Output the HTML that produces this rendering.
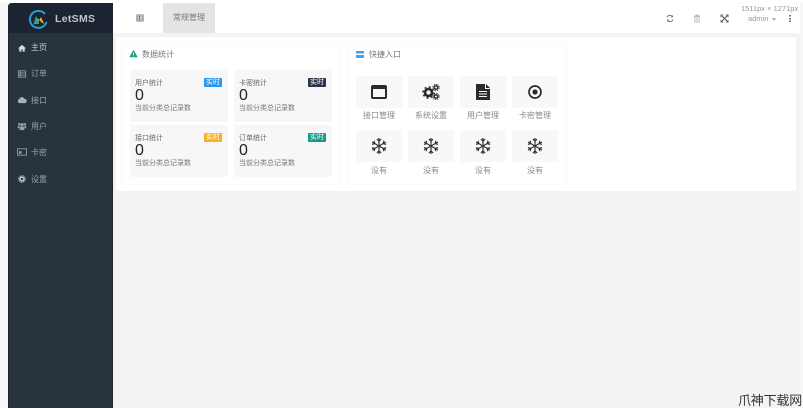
<!DOCTYPE html>
<html lang="zh"><head><meta charset="utf-8"><title>LetSMS</title>
<style>
*{box-sizing:border-box}
html,body{margin:0;padding:0;background:#fff}
#root{width:803px;height:408px;overflow:hidden;background:#f7f7f7;position:relative;font-family:"Liberation Sans","Noto Sans CJK SC",sans-serif;color:#555;filter:blur(.35px)}
.a{position:absolute}
#side{left:8px;top:3px;width:105px;height:405px;background:#27333d;border-radius:4px 0 0 0;border-left:1px solid #1d262e;border-right:1px solid #1d262e}
#brand{left:8px;top:3px;width:105px;height:30px;background:#1b2430;border-radius:4px 0 0 0}
.nav{left:31px;font-size:8px;line-height:12px;color:#9aa3aa}
.ic{left:17px;width:10px;height:10px}
.stat{background:#f7f7f8;width:98px;height:52px;border-radius:2px}
.st{left:5px;top:9px;font-size:7px;line-height:9px;color:#666}
.num{left:5px;top:18px;font-size:16px;line-height:16px;color:#222}
.sub{left:5px;top:34px;font-size:7px;line-height:10px;color:#777}
.tag{left:74px;top:8px;width:18px;height:9px;border-radius:1px;color:#fff;font-size:7px;line-height:9px;text-align:center}
.tile{background:#f8f8f8;width:46px;height:32px;display:flex;align-items:center;justify-content:center}
.lb{width:46px;text-align:center;font-size:8px;line-height:10px;color:#888}
</style></head><body><div id="root">
<svg width="0" height="0" style="position:absolute"><defs><g id="sn" stroke="#333" stroke-width="1.200" fill="none"><g id="sp"><path d="M8 8V0M5.900 1.100L8 3.200l2.100-2.100"/></g><use href="#sp" transform="rotate(60 8 8)"/><use href="#sp" transform="rotate(120 8 8)"/><use href="#sp" transform="rotate(180 8 8)"/><use href="#sp" transform="rotate(240 8 8)"/><use href="#sp" transform="rotate(300 8 8)"/></g></defs></svg>
<div class="a" style="left:0;top:0;width:803px;height:3px;background:#fff"></div>
<div class="a" style="left:113px;top:3px;width:687px;height:30px;background:#fff"></div>
<div class="a" style="left:113px;top:33px;width:687px;height:375px;background:#f3f3f3"></div>
<div class="a" id="side"></div><div class="a" id="brand"></div>
<svg class="a" style="left:28px;top:9px" width="21" height="21" viewBox="0 0 21 21"><path d="M17 5A8.500 8.500 0 1 0 18.500 13" fill="none" stroke="#2a9fd0" stroke-width="2"/><path d="M5.500 15L8 7l3 5v3z" fill="#2ba58e"/><path d="M8 7l3 5 2-4 3 7-3-2-2-3-1 0z" fill="#e8b71e"/></svg>
<div class="a" style="left:55px;top:12px;font-size:10.500px;line-height:14px;font-weight:bold;color:#bfc5ca;letter-spacing:.3px">LetSMS</div>

<svg class="a ic" style="top:43px" viewBox="0 0 11 11"><path d="M5.500 2L1 6h1.500v3.500h2.300V7h1.400v2.500h2.300V6H10z" fill="#d8dcdf"/></svg>
<div class="a nav" style="top:42px;color:#c6cbcf">主页</div>
<svg class="a ic" style="top:69px" viewBox="0 0 11 11"><path d="M1.500 2h8v7h-8z" fill="none" stroke="#8f989f"/><path d="M1.500 4.300h8M1.500 6.700h8M4 2v7" stroke="#8f989f"/></svg>
<div class="a nav" style="top:68px">订单</div>
<svg class="a ic" style="top:95px" viewBox="0 0 11 11"><path d="M3 9a2.300 2.300 0 0 1-.4-4.500A2.800 2.800 0 0 1 8 4.200 2.400 2.400 0 0 1 8.500 9z" fill="#aab1b7"/></svg>
<div class="a nav" style="top:95px">接口</div>
<svg class="a ic" style="top:121px" viewBox="0 0 11 11"><circle cx="5.500" cy="4" r="1.800" fill="#99a1a8"/><circle cx="2.300" cy="3.500" r="1.300" fill="#99a1a8"/><circle cx="8.700" cy="3.500" r="1.300" fill="#99a1a8"/><path d="M3 10V7l1-1h3l1 1v3zM.8 8V6l1-1h1v3zM10.200 8V6l-1-1h-1v3z" fill="#99a1a8"/></svg>
<div class="a nav" style="top:121px">用户</div>
<svg class="a ic" style="top:147px" viewBox="0 0 11 11"><rect x=".5" y="2" width="10" height="7" fill="none" stroke="#8f989f"/><rect x="2" y="4.500" width="3" height="3" fill="#8f989f"/></svg>
<div class="a nav" style="top:147px">卡密</div>
<svg class="a ic" style="top:174px" viewBox="0 0 11 11"><circle cx="5.500" cy="5.500" r="2.200" fill="none" stroke="#b6bcc1" stroke-width="2"/><circle cx="5.500" cy="5.500" r="3.800" fill="none" stroke="#b6bcc1" stroke-width="1" stroke-dasharray="1.500 1.480"/></svg>
<div class="a nav" style="top:174px">设置</div>

<svg class="a" style="left:136px;top:14px" width="8" height="8" viewBox="0 0 9 9"><path d="M1 1h7v7H1zM1 3.300h7M1 5.700h7M4 1v7" fill="none" stroke="#777" stroke-width="1"/></svg>
<div class="a" style="left:163px;top:3px;width:52px;height:30px;background:#e4e5e3;font-size:8px;line-height:30px;text-align:center;color:#777">常规管理</div>

<svg class="a" style="left:666px;top:14px" width="8" height="9" viewBox="0 0 8 9"><path d="M1 3.500A3 3 0 0 1 6.500 3M7 5.500A3 3 0 0 1 1.500 6" fill="none" stroke="#777" stroke-width="1"/><path d="M7 1v2.500H4.800zM1 8V5.500h2.200z" fill="#777"/></svg>
<svg class="a" style="left:693px;top:14px" width="8" height="9" viewBox="0 0 8 9"><path d="M1 2h6M3 2V1h2v1M1.800 3h4.400v5H1.800zM4 4v3" fill="none" stroke="#bbb" stroke-width=".9"/></svg>
<svg class="a" style="left:720px;top:14px" width="9" height="9" viewBox="0 0 9 9"><path d="M1 1l7 7M8 1L1 8" stroke="#666" stroke-width="1.200"/><path d="M.5.500h3L.5 3.500zM8.500.500h-3l3 3zM.5 8.500h3l-3-3zM8.500 8.500h-3l3-3z" fill="#666"/></svg>
<div class="a" style="left:741px;top:4px;font-size:7.500px;line-height:9px;color:#999;white-space:nowrap">1511px × 1271px</div>
<div class="a" style="left:748px;top:14px;font-size:7.500px;line-height:9px;color:#999">admin</div>
<div class="a" style="left:772px;top:18px;width:0;height:0;border:2.500px solid transparent;border-top:3px solid #aaa"></div>
<div class="a" style="left:789px;top:15px;width:1.500px;height:7px;background:repeating-linear-gradient(#777 0 1.500px,transparent 1.500px 2.750px)"></div>

<div class="a" style="left:116px;top:37px;width:680px;height:154px;background:#fff"></div>

<div class="a" style="left:122px;top:43px;width:217px;height:141px;background:#fff;box-shadow:0 0 3px rgba(0,0,0,.05)"></div>
<svg class="a" style="left:129px;top:49px" width="9" height="9" viewBox="0 0 9 9"><path d="M4.500.8L8.700 8.200H.3z" fill="#1f9c85"/><path d="M4.100 3.500h.8v2.500h-.8zM4.100 6.500h.8v.8h-.8z" fill="#fff"/></svg>
<div class="a" style="left:142px;top:49px;font-size:8px;line-height:11px;color:#777">数据统计</div>

<div class="a stat" style="left:130px;top:70px"><div class="a st">用户统计</div><div class="a num">0</div><div class="a sub">当前分类总记录数</div><div class="a tag" style="background:#2a98ee">实时</div></div>
<div class="a stat" style="left:234px;top:70px"><div class="a st">卡密统计</div><div class="a num">0</div><div class="a sub">当前分类总记录数</div><div class="a tag" style="background:#2c3548">实时</div></div>
<div class="a stat" style="left:130px;top:125px"><div class="a st">接口统计</div><div class="a num">0</div><div class="a sub">当前分类总记录数</div><div class="a tag" style="background:#fbb021">实时</div></div>
<div class="a stat" style="left:234px;top:125px"><div class="a st">订单统计</div><div class="a num">0</div><div class="a sub">当前分类总记录数</div><div class="a tag" style="background:#149a85">实时</div></div>

<div class="a" style="left:348px;top:43px;width:218px;height:141px;background:#fff;box-shadow:0 0 3px rgba(0,0,0,.05)"></div>
<svg class="a" style="left:356px;top:51px" width="8" height="7" viewBox="0 0 8 7"><rect width="8" height="7" rx="1" fill="#4a9fe8"/><rect y="2.500" width="8" height="1.500" fill="#fff"/></svg>
<div class="a" style="left:369px;top:49px;font-size:8px;line-height:11px;color:#777">快捷入口</div>

<div class="a tile" style="left:356px;top:76px"><svg width="16" height="14" viewBox="0 0 16 14"><rect x="1" y="1" width="14" height="12" rx="1" fill="none" stroke="#2b2b2b" stroke-width="2"/><rect x="1" y="1" width="14" height="3" fill="#2b2b2b"/></svg></div>
<div class="a tile" style="left:408px;top:76px"><svg width="18" height="16" viewBox="0 0 18 16"><circle cx="6.500" cy="8.500" r="3.500" fill="none" stroke="#2b2b2b" stroke-width="2.600"/><circle cx="6.500" cy="8.500" r="5.500" fill="none" stroke="#2b2b2b" stroke-width="1.500" stroke-dasharray="2 2.320"/><circle cx="14" cy="3.500" r="1.800" fill="none" stroke="#2b2b2b" stroke-width="1.500"/><circle cx="14" cy="3.500" r="3.200" fill="none" stroke="#2b2b2b" stroke-width="1" stroke-dasharray="1.200 1.310"/><circle cx="14" cy="12.500" r="1.800" fill="none" stroke="#2b2b2b" stroke-width="1.500"/><circle cx="14" cy="12.500" r="3.200" fill="none" stroke="#2b2b2b" stroke-width="1" stroke-dasharray="1.200 1.310"/></svg></div>
<div class="a tile" style="left:460px;top:76px"><svg width="14" height="16" viewBox="0 0 14 16"><path d="M0 0h9v5h5v11H0z" fill="#2b2b2b"/><path d="M10 0l4 4h-4z" fill="#2b2b2b"/><path d="M3 7.500h8M3 10h8M3 12.500h8" stroke="#f8f8f8" stroke-width="1"/></svg></div>
<div class="a tile" style="left:512px;top:76px"><svg width="14" height="14" viewBox="0 0 14 14"><circle cx="7" cy="7" r="6" fill="none" stroke="#2b2b2b" stroke-width="1.700"/><circle cx="7" cy="7" r="2.600" fill="#2b2b2b"/></svg></div>
<div class="a lb" style="left:356px;top:111px">接口管理</div>
<div class="a lb" style="left:408px;top:111px">系统设置</div>
<div class="a lb" style="left:460px;top:111px">用户管理</div>
<div class="a lb" style="left:512px;top:111px">卡密管理</div>

<div class="a tile" style="left:356px;top:130px"><svg width="16" height="16" viewBox="0 0 16 16"><use href="#sn"/></svg></div>
<div class="a tile" style="left:408px;top:130px"><svg width="16" height="16" viewBox="0 0 16 16"><use href="#sn"/></svg></div>
<div class="a tile" style="left:460px;top:130px"><svg width="16" height="16" viewBox="0 0 16 16"><use href="#sn"/></svg></div>
<div class="a tile" style="left:512px;top:130px"><svg width="16" height="16" viewBox="0 0 16 16"><use href="#sn"/></svg></div>
<div class="a lb" style="left:356px;top:166px">没有</div>
<div class="a lb" style="left:408px;top:166px">没有</div>
<div class="a lb" style="left:460px;top:166px">没有</div>
<div class="a lb" style="left:512px;top:166px">没有</div>

<div class="a" style="left:738px;top:393px;font-size:13px;line-height:15px;color:#333;white-space:nowrap;letter-spacing:-.2px">爪神下载网</div>
</div></body></html>
